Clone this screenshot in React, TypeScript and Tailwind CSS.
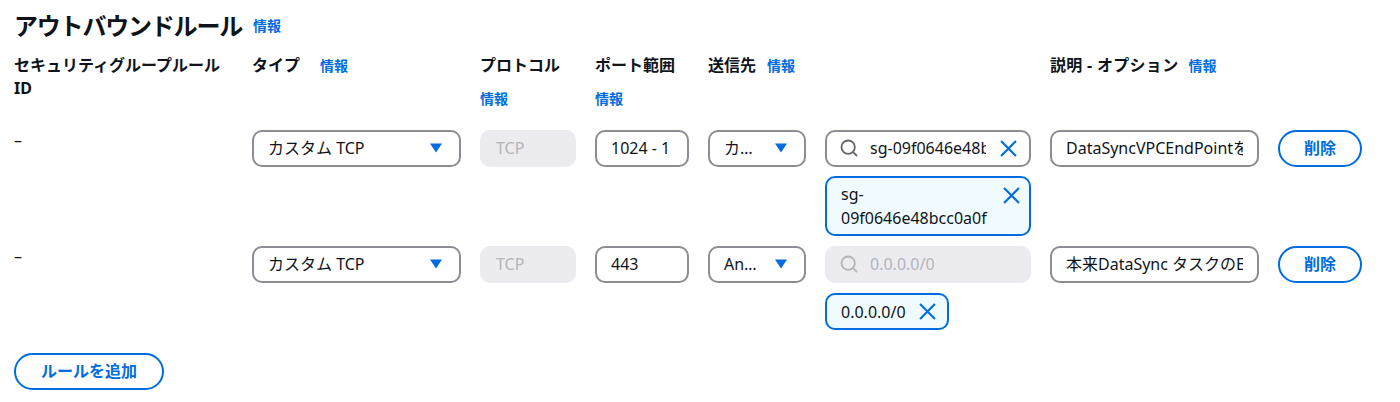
import { Search } from 'lucide-react';

const FONT = "font-['Noto_Sans','Noto_Sans_CJK_JP',sans-serif]";
const COLS = 'grid grid-cols-[219px_209px_96px_94px_98px_206px_209px_84px] gap-x-[19px]';

function Info() {
  return <a className="text-[14px] leading-[24px] font-bold text-[#006ce0]">情報</a>;
}

function Caret() {
  return (
    <svg width="14" height="10" viewBox="0 0 14 10" className="shrink-0">
      <path d="M1 0.5h12L7 9.5z" fill="#006ce0" />
    </svg>
  );
}

function Cross({ size = 16 }: { size?: number }) {
  return (
    <svg width={size} height={size} viewBox="0 0 16 16" className="shrink-0" fill="none" stroke="#006ce0" strokeWidth="2">
      <path d="M1 1l14 14M15 1L1 15" />
    </svg>
  );
}

function Box({ children, disabled = false }: { children: React.ReactNode; disabled?: boolean }) {
  const skin = disabled ? 'bg-[#ebebf0] border-transparent text-[#b4b4bb]' : 'bg-white border-[#8c8c94] text-[#0f141a]';
  return (
    <div className={`h-[37px] rounded-[10px] border-2 flex items-center px-[14px] pb-[1px] text-[16px] overflow-hidden whitespace-nowrap ${skin}`}>
      {children}
    </div>
  );
}

function SelectBox({ value }: { value: string }) {
  return (
    <div className="h-[37px] rounded-[10px] bg-white border-2 border-[#8c8c94] flex items-center justify-between pl-[14px] pr-[16px] pb-[1px] text-[16px] text-[#0f141a]">
      <span className="whitespace-nowrap">{value}</span>
      <Caret />
    </div>
  );
}

function Token({ children, wide = false }: { children: React.ReactNode; wide?: boolean }) {
  return (
    <div className={`rounded-[10px] border-2 border-[#006ce0] bg-[#f0fbff] text-[16px] text-[#0f141a] pl-[14px] flex justify-between ${wide ? 'mt-[9px] w-full h-[60px] pr-[9px] pt-[4px] leading-[24px] items-start' : 'mt-[10px] w-fit h-[37px] pr-[11px] items-center gap-[13px]'}`}>
      {children}
    </div>
  );
}

function PillButton({ label, className = '' }: { label: string; className?: string }) {
  return (
    <button
      type="button"
      className={`h-[37px] rounded-full border-2 border-[#006ce0] bg-white pb-[2px] text-[16px] font-bold text-[#006ce0] ${className}`}
    >
      {label}
    </button>
  );
}

function Rule({ port, dest, search, desc, token, spacing }: {
  port: string;
  dest: string;
  search: string;
  desc: string;
  token: React.ReactNode;
  spacing: string;
}) {
  const empty = search === '0.0.0.0/0';
  return (
    <div className={`${COLS} ${spacing}`}>
      <div className="text-[16px] leading-[20px] text-[#0f141a]">–</div>
      <SelectBox value="カスタム TCP" />
      <Box disabled>TCP</Box>
      <Box>{port}</Box>
      <SelectBox value={dest} />
      <div>
        <div className={`h-[37px] rounded-[10px] border-2 flex items-center pl-[12px] pr-[12px] pb-[1px] text-[16px] ${empty ? 'bg-[#ebebf0] border-transparent text-[#b4b4bb]' : 'bg-white border-[#8c8c94] text-[#0f141a]'}`}>
          <Search size={20} strokeWidth={2.2} className={`shrink-0 ${empty ? 'text-[#b4b4bb]' : 'text-[#656871]'}`} />
          <span className="ml-[11px] overflow-hidden whitespace-nowrap w-[116px]">{search}</span>
          {!empty && <span className="ml-auto flex"><Cross size={17} /></span>}
        </div>
        {token}
      </div>
      <Box>
        <span className="overflow-hidden w-full">{desc}</span>
      </Box>
      <PillButton label="削除" />
    </div>
  );
}

export default function App() {
  return (
    <div className={`${FONT} w-[1400px] h-[402px] bg-white pl-[14px] pt-[11px] overflow-hidden`}>
      <div className="flex items-center gap-[11px] h-[30px]">
        <h2 className="text-[24px] leading-[30px] font-bold text-[#0f141a] tracking-[-1.2px]">アウトバウンドルール</h2>
        <Info />
      </div>

      <div className={`${COLS} mt-[13px] h-[74px] text-[16px] font-bold text-[#0f141a] leading-[23px]`}>
        <div>セキュリティグループルール ID</div>
        <div className="flex gap-[20px]">
          <span>タイプ</span>
          <Info />
        </div>
        <div className="flex flex-col gap-[10px]">
          <span>プロトコル</span>
          <Info />
        </div>
        <div className="flex flex-col gap-[10px]">
          <span>ポート範囲</span>
          <Info />
        </div>
        <div className="flex gap-[11px] col-span-2">
          <span>送信先</span>
          <Info />
        </div>
        <div className="flex gap-[10px]">
          <span className="whitespace-nowrap tracking-[0.3px]">説明 - オプション</span>
          <Info />
        </div>
      </div>

      <Rule
        port="1024 - 1"
        dest="カ…"
        search="sg-09f0646e48bcc0a0f"
        desc="DataSyncVPCEndPointを"
        spacing="mt-[2px]"
        token={
          <Token wide>
            <span className="w-[150px]">sg-<br />09f0646e48bcc0a0f</span>
            <span className="flex pt-[5px]"><Cross size={17} /></span>
          </Token>
        }
      />
      <Rule
        port="443"
        dest="An…"
        search="0.0.0.0/0"
        desc="本来DataSync タスクのE"
        spacing="mt-[10px]"
        token={
          <Token>
            <span>0.0.0.0/0</span>
            <Cross size={17} />
          </Token>
        }
      />

      <PillButton label="ルールを追加" className="mt-[23px] w-[150px]" />
    </div>
  );
}
